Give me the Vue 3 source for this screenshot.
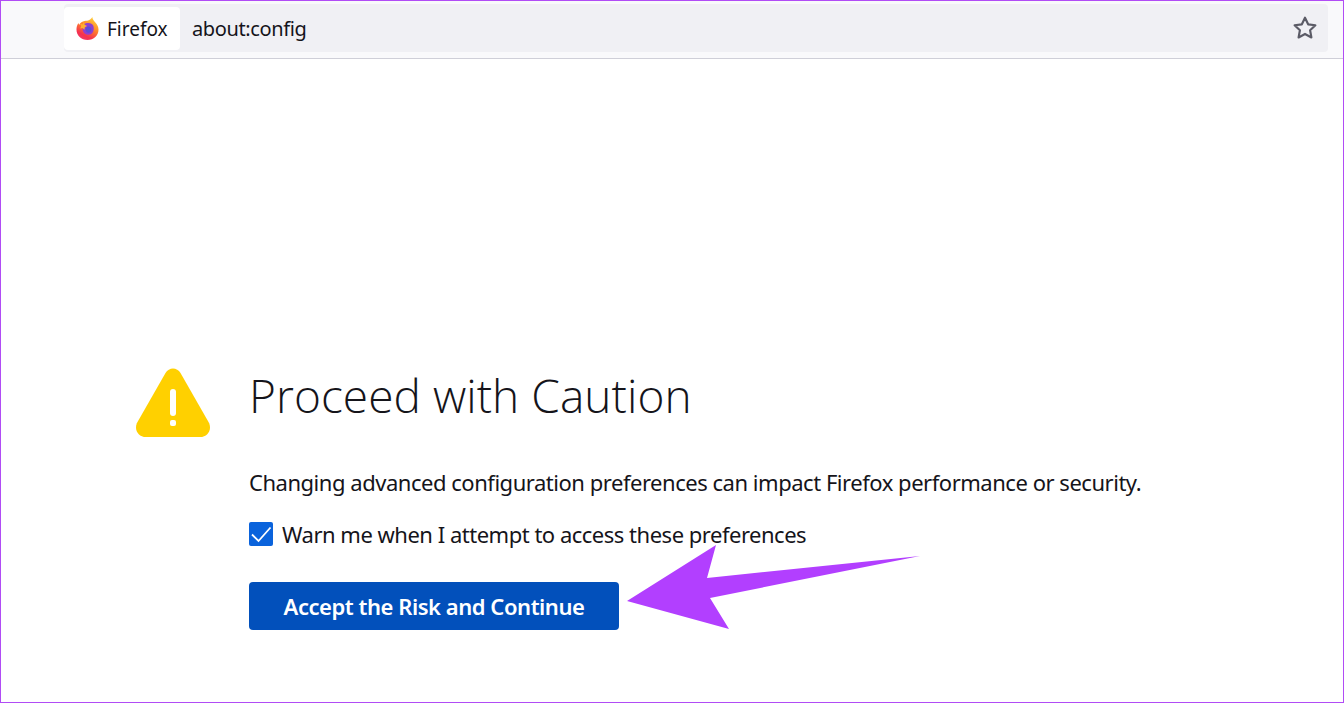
<script setup>
const title = 'Proceed with Caution'
const description = 'Changing advanced configuration preferences can impact Firefox performance or security.'
const warnLabel = 'Warn me when I attempt to access these preferences'
const action = 'Accept the Risk and Continue'
</script>

<template>
  <div class="page">
    <header class="toolbar">
      <div class="urlbar">
        <div class="identity">
          <svg class="logo" viewBox="0 0 24 26" width="23" height="25" aria-hidden="true">
            <defs>
              <linearGradient id="ffOuter" x1="0.75" y1="0" x2="0.25" y2="1">
                <stop offset="0" stop-color="#ffd23a" />
                <stop offset="0.4" stop-color="#ff8a2a" />
                <stop offset="0.8" stop-color="#f5304f" />
                <stop offset="1" stop-color="#f03a6a" />
              </linearGradient>
            </defs>
            <path d="M17 1c.3 2.500 1.700 4 3.200 5.700C22 8.700 23.500 11 23.500 14c0 6.300-5 11-11.500 11S.5 20.300.5 14C.5 11.500 1.200 9.200 2.500 7.300c.2.800.5 1.400 1 1.800C4.500 7 6.500 5.500 9 5.200c3.500-.4 6.500-1 8-4.200z" fill="url(#ffOuter)" />
            <path d="M7 9.500c3-2.700 7-2.700 9.500-1.200 1.300.8 2 2.300 2 4.700 0 3.700-2.200 6.500-5.500 6.500-3 0-5.500-2-6-5z" fill="#8f3fd0" />
            <path d="M10 14c0-1.800 1.200-3.200 3-3.200s3 1.400 3 3.200-1.200 3.500-3 3.500-3-1.700-3-3.500z" fill="#5a4ed8" />
            <path d="M4 7.500 6.800 8.700 8.300 6.500 9 9.200 11.500 10.300 9.200 11.700 8.800 14.300 6.800 12.500 4.400 13 5.400 10.500z" fill="#ffb02e" />
          </svg>
          <span class="identity-label">Firefox</span>
        </div>
        <span class="address">about:config</span>
        <svg class="star" viewBox="0 0 24 24" width="26" height="26" aria-hidden="true">
          <path d="M12 2.500l2.900 6.100 6.700.9-4.900 4.600 1.200 6.600L12 17.500l-5.900 3.200 1.200-6.600-4.900-4.600 6.700-.9z" fill="none" stroke="#5b5b66" stroke-width="2" stroke-linejoin="round" />
        </svg>
      </div>
    </header>

    <main class="content">
      <svg class="warning" viewBox="0 0 76 70" width="76" height="70" aria-hidden="true">
        <path d="M30.500 5C34 -1 42 -1 45.500 5L73.500 54C77.500 61 73 69 65 69H11C3 69 -1.500 61 2.500 54Z" fill="#ffd000" />
        <rect x="35" y="21" width="6" height="27" rx="3" fill="#fff" />
        <rect x="35" y="52" width="6" height="6" rx="2" fill="#fff" />
      </svg>
      <div class="body">
        <h1 class="title">{{ title }}</h1>
        <p class="description">{{ description }}</p>
        <label class="warn">
          <span class="check">
            <svg viewBox="0 0 24 24" width="24" height="24" aria-hidden="true">
              <path d="M3 12.500 9.500 19 21.500 5.500" fill="none" stroke="#fff" stroke-width="1.800" />
            </svg>
          </span>
          <span>{{ warnLabel }}</span>
        </label>
        <button class="accept" type="button">{{ action }}</button>
      </div>
    </main>

    <svg class="arrow" viewBox="0 0 1344 703" width="1344" height="703" aria-hidden="true">
      <path d="M627 601 716 545 707 578 920 556 710 598 729 629Z" fill="#b23fff" />
    </svg>
  </div>
</template>

<style scoped>
.page {
  position: relative;
  box-sizing: border-box;
  width: 1344px;
  height: 703px;
  border: 1px solid #b14cf5;
  background: #fff;
  overflow: hidden;
  font-family: "Noto Sans", "Open Sans", sans-serif;
  color: #15141a;
}
.toolbar {
  box-sizing: border-box;
  height: 58px;
  padding: 3px 15px 0 63px;
  background: #f9f9fb;
  border-bottom: 1px solid #cfcfd8;
}
.urlbar {
  display: flex;
  align-items: center;
  height: 48px;
  padding-right: 10px;
  background: #f0f0f4;
  border-radius: 4px;
}
.identity {
  display: flex;
  align-items: center;
  gap: 8px;
  box-sizing: border-box;
  width: 116px;
  height: 43px;
  margin-top: 1px;
  padding-left: 12px;
  background: #fff;
  border-radius: 4px;
}
.logo {
  flex: none;
}
.identity-label {
  font-size: 19px;
}
.address {
  flex: 1;
  margin-left: 12px;
  font-size: 20px;
  letter-spacing: -0.37px;
}
.star {
  flex: none;
}
.content {
  display: flex;
  padding: 309px 0 0 134px;
}
.warning {
  flex: none;
  margin-right: 38px;
}
.body {
  flex: 1;
  margin-top: -3px;
}
.title {
  margin: 0;
  font-family: "Open Sans", sans-serif;
  font-size: 46px;
  line-height: 60px;
  font-weight: 300;
  letter-spacing: 0.05px;
}
.description {
  margin: 42px 0 0;
  font-size: 22px;
  line-height: 30px;
  letter-spacing: -0.47px;
}
.warn {
  display: flex;
  align-items: center;
  gap: 9px;
  margin-top: 22px;
  font-size: 22px;
  line-height: 30px;
  letter-spacing: -0.49px;
}
.check {
  display: block;
  width: 24px;
  height: 24px;
  background: #0a63dc;
  border-radius: 2px;
}
.check svg {
  display: block;
}
.accept {
  display: block;
  box-sizing: border-box;
  width: 370px;
  height: 48px;
  margin-top: 33px;
  padding: 0;
  border: 0;
  border-radius: 4px;
  background: #0250bb;
  color: #fff;
  font-family: inherit;
  font-size: 22px;
  font-weight: 600;
  letter-spacing: -0.46px;
}
.arrow {
  position: absolute;
  left: -1px;
  top: -1px;
  pointer-events: none;
}
</style>
